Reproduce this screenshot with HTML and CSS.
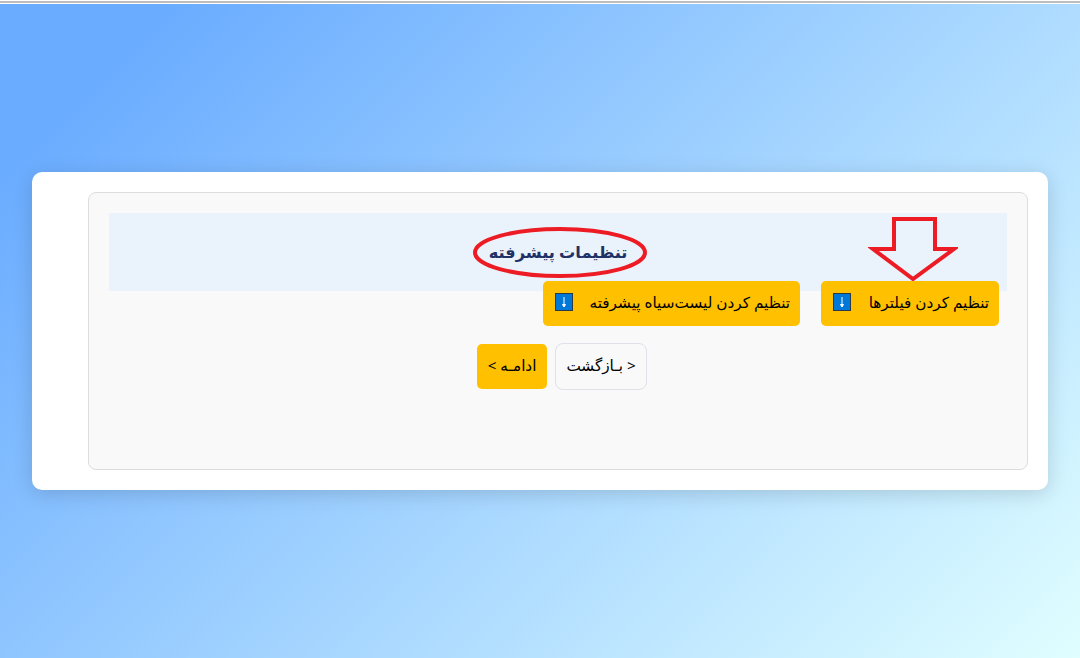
FILE: index.html
```html
<!DOCTYPE html>
<html lang="fa" dir="rtl">

	<head>
		<meta charset="utf-8" />
		<title>تنظیمات پیشرفته</title>
		<link rel="stylesheet" href="styles.css">
	</head>

	<body>
		<div class="topline"></div>
		<div class="card">
			<div class="panel">
				<div class="header">
					<h2>تنظیمات پیشرفته</h2>
					<!-- red marks drawn over the screenshot -->
					<svg class="mark-ring" width="176" height="54" viewBox="0 0 176 54">
						<ellipse cx="88" cy="26.5" rx="85" ry="23.5" fill="none" stroke="#ed1c24" stroke-width="4" />
					</svg>
					<svg class="mark-arrow" width="90" height="66" viewBox="0 0 90 66">
						<path d="M26 3H67V33H86L45 63L5 33H26Z" fill="none" stroke="#ed1c24" stroke-width="4" />
					</svg>
				</div>
				<div class="actions">
					<button class="btn btn-amber btn-filters">تنظیم کردن فیلترها
						<svg class="arrow-icon" width="18" height="18" viewBox="0 0 18 18">
							<rect x="0.5" y="0.5" width="17" height="17" fill="#0078d7" stroke="#2b3a44" />
							<path d="M9 4V13M7.5 11.5L9 14L10.5 11.5Z" fill="#fff" stroke="#fff" />
						</svg>
					</button>
					<button class="btn btn-amber btn-blacklist">تنظیم کردن لیست‌سیاه پیشرفته
						<svg class="arrow-icon" width="18" height="18" viewBox="0 0 18 18">
							<rect x="0.5" y="0.5" width="17" height="17" fill="#0078d7" stroke="#2b3a44" />
							<path d="M9 4V13M7.5 11.5L9 14L10.5 11.5Z" fill="#fff" stroke="#fff" />
						</svg>
					</button>
				</div>
				<div class="nav">
					<button class="btn btn-light">&lt; بـازگشت</button>
					<button class="btn btn-amber btn-next">ادامـه &gt;</button>
				</div>
			</div>
		</div>
	</body>

</html>
```

FILE: styles.css
```css
html {
	height: 100%;
}

body {
	height: 658px;
	margin: 0;
	overflow: hidden;
	display: flex;
	flex-direction: column;
	background: linear-gradient(135deg, #6aacff 10%, #e0feff 100%);
	font-family: "Noto Sans", "DejaVu Sans", sans-serif;
}

.topline {
	height: 2px;
	background: #bdbdbd;
	border-top: 1px solid #fff;
	border-bottom: 1px solid #fff;
}

.card {
	box-sizing: border-box;
	width: 1016px;
	height: 318px;
	margin: 168px 32px 0;
	padding: 20px;
	background: #fff;
	border-radius: 10px;
	box-shadow: 0 4px 20px rgba(0, 0, 0, 0.15);
}

.panel {
	box-sizing: border-box;
	width: 940px;
	height: 278px;
	padding: 20px;
	background: #f9f9f9;
	border: 1px solid #ddd;
	border-radius: 8px;
}

.header {
	position: relative;
	height: 78px;
	display: flex;
	align-items: center;
	justify-content: center;
	background: #eaf3fb;
}

.header h2 {
	margin: 0;
	font-size: 16.2px;
	font-weight: bold;
	color: #1f3166;
}

.mark-ring {
	position: absolute;
	left: 363px;
	top: 13px;
}

.mark-arrow {
	position: absolute;
	left: 759px;
	top: 3px;
}

.actions {
	position: relative;
	display: flex;
	gap: 21px;
	margin-top: -10px;
	padding-right: 8px;
}

.nav {
	display: flex;
	justify-content: center;
	align-items: center;
	gap: 8px;
	margin-top: 17px;
	padding-left: 8px;
}

.btn {
	height: 45px;
	padding: 0 10px 4px;
	border: 0;
	border-radius: 5px;
	font: inherit;
	font-size: 15.25px;
	color: #000;
	display: flex;
	align-items: center;
	white-space: nowrap;
}

.btn-amber {
	background: #ffc000;
}

.btn-light {
	height: 47px;
	width: 92px;
	justify-content: center;
	background: #f9f9f9;
	border: 1px solid #e0e0e8;
	border-radius: 8px;
}

.btn-next {
	width: 70px;
	justify-content: center;
}

.btn-filters,
.btn-blacklist {
	justify-content: space-between;
	padding-left: 12px;
}

.btn-filters {
	width: 178px;
}

.btn-blacklist {
	width: 257px;
}
```
